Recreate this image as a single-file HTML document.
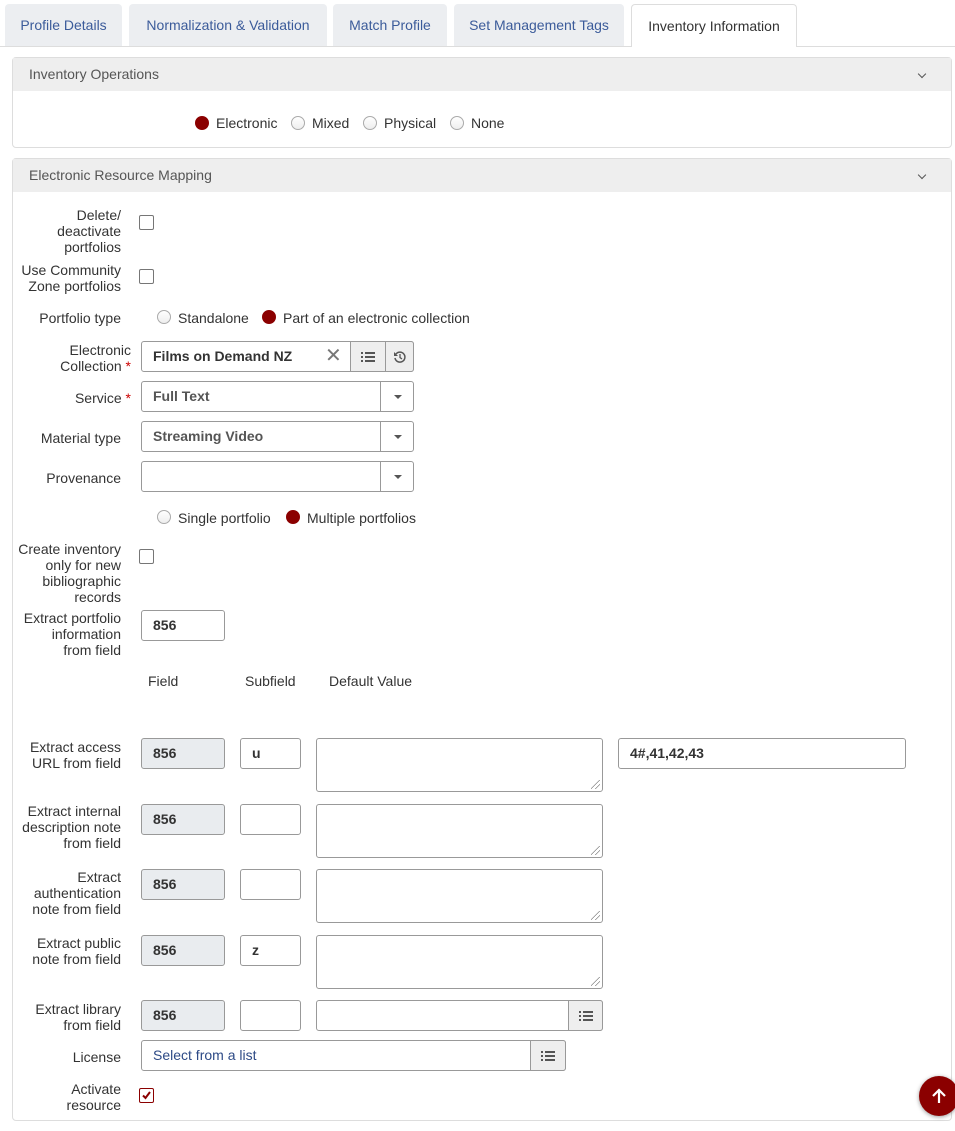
<!DOCTYPE html>
<html><head><meta charset="utf-8"><style>
*{box-sizing:border-box}
body{margin:0;width:955px;height:1131px;background:#fff;font-family:"Liberation Sans",sans-serif;font-size:14px;color:#333;position:relative;overflow:hidden}
.a{position:absolute}
.tab{position:absolute;top:4px;height:42px;background:#eceef1;border-radius:4px 4px 0 0;color:#3b5b9a;line-height:42px;text-align:center;font-size:14px}
.tab.act{background:#fff;border:1px solid #ddd;border-bottom:none;color:#333;height:43px}
.panel{position:absolute;left:12px;width:940px;border:1px solid #ddd;border-radius:4px}
.ph{height:33px;background:#eee;line-height:33px;padding-left:16px;color:#555;font-size:14px;position:relative}
.ph:after{content:"";position:absolute;right:26px;top:13px;width:5px;height:5px;border-right:1.5px solid #555;border-bottom:1.5px solid #555;transform:rotate(45deg)}
.lbl{position:absolute;right:834px;text-align:right;line-height:16px;width:120px}
.req{color:#c00}
.cb{position:absolute;left:139px;width:15px;height:15px;border:1px solid #767676;border-radius:2px;background:#fff}
.rd{position:absolute;width:14px;height:14px;border-radius:50%;border:1px solid #aaa;background:linear-gradient(#fff,#eee)}
.rd.on{background:#8b0000;border-color:#8b0000}
.rl{position:absolute;line-height:16px}
.in{position:absolute;border:1px solid #999;border-radius:3px;background:#fff;height:31px;line-height:29px;padding-left:11px;font-weight:bold}
.in.g{background:#e9ecef}
.ta{position:absolute;border:1px solid #999;border-radius:3px;background:#fff;height:54px}
.ta:after{content:"";position:absolute;right:2px;bottom:2px;width:9px;height:9px;background:linear-gradient(135deg,transparent 45%,#888 45%,#888 52%,transparent 52%,transparent 70%,#888 70%,#888 77%,transparent 77%)}
.btn{position:absolute;top:-1px;height:31px;border:1px solid #999;background:#eee;border-radius:0 3px 3px 0}
.dd{position:absolute;top:0;right:0;width:33px;height:29px;border-left:1px solid #999}
.dd:after{content:"";position:absolute;left:13px;top:13px;border:4px solid transparent;border-top:4px solid #555;border-bottom:none}
.li{position:absolute;left:50%;top:50%;transform:translate(-50%,-50%)}
</style></head><body>
<div class="tab" style="left:5px;width:117px">Profile Details</div>
<div class="tab" style="left:129px;width:198px">Normalization &amp; Validation</div>
<div class="tab" style="left:333px;width:114px">Match Profile</div>
<div class="tab" style="left:454px;width:170px">Set Management Tags</div>
<div class="a" style="left:0;top:46px;width:955px;height:1px;background:#ddd"></div>
<div class="tab act" style="left:631px;width:166px">Inventory Information</div>

<div class="panel" style="top:57px;height:91px"><div class="ph">Inventory Operations</div></div>
<div class="rd on" style="left:195px;top:116px"></div><div class="rl" style="left:216px;top:115px">Electronic</div>
<div class="rd" style="left:291px;top:116px"></div><div class="rl" style="left:312px;top:115px">Mixed</div>
<div class="rd" style="left:363px;top:116px"></div><div class="rl" style="left:384px;top:115px">Physical</div>
<div class="rd" style="left:450px;top:116px"></div><div class="rl" style="left:471px;top:115px">None</div>

<div class="panel" style="top:158px;height:963px"><div class="ph">Electronic Resource Mapping</div></div>

<div class="lbl" style="top:207px">Delete/<br>deactivate<br>portfolios</div>
<div class="cb" style="top:215px"></div>
<div class="lbl" style="top:262px">Use Community<br>Zone portfolios</div>
<div class="cb" style="top:269px"></div>
<div class="lbl" style="top:310px">Portfolio type</div>
<div class="rd" style="left:157px;top:310px"></div><div class="rl" style="left:178px;top:310px">Standalone</div>
<div class="rd on" style="left:262px;top:310px"></div><div class="rl" style="left:283px;top:310px">Part of an electronic collection</div>

<div class="lbl" style="top:342px;right:824px">Electronic<br>Collection <span class="req">*</span></div>
<div class="in" style="left:141px;top:341px;width:273px">Films on Demand NZ
 <span class="a" style="left:183px;top:0;font-size:20px;color:#777;font-weight:normal">✕</span>
 <div class="btn" style="left:208px;width:36px;border-radius:0"><svg class="li" width="14" height="12"><g fill="#555"><rect x="0" y="1" width="2" height="2"/><rect x="0" y="5" width="2" height="2"/><rect x="0" y="9" width="2" height="2"/><rect x="4" y="1" width="10" height="2"/><rect x="4" y="5" width="10" height="2"/><rect x="4" y="9" width="10" height="2"/></g></svg></div>
 <div class="btn" style="left:243px;width:29px"><svg class="li" width="14" height="14" viewBox="0 0 14 14"><path d="M3 4A5 5 0 1 1 2 8" fill="none" stroke="#555" stroke-width="1.5"/><path d="M1 2v4h4z" fill="#555"/><path d="M7 4v3.5l2 1.5" fill="none" stroke="#555" stroke-width="1.3"/></svg></div>
</div>

<div class="lbl" style="top:390px;right:824px">Service <span class="req">*</span></div>
<div class="in" style="left:141px;top:381px;width:273px;color:#555">Full Text<div class="dd"></div></div>
<div class="lbl" style="top:430px">Material type</div>
<div class="in" style="left:141px;top:421px;width:273px;color:#555">Streaming Video<div class="dd"></div></div>
<div class="lbl" style="top:470px">Provenance</div>
<div class="in" style="left:141px;top:461px;width:273px"><div class="dd"></div></div>

<div class="rd" style="left:157px;top:510px"></div><div class="rl" style="left:178px;top:510px">Single portfolio</div>
<div class="rd on" style="left:286px;top:510px"></div><div class="rl" style="left:307px;top:510px">Multiple portfolios</div>

<div class="lbl" style="top:541px">Create inventory<br>only for new<br>bibliographic<br>records</div>
<div class="cb" style="top:549px"></div>
<div class="lbl" style="top:610px">Extract portfolio<br>information<br>from field</div>
<div class="in" style="left:141px;top:610px;width:84px">856</div>

<div class="rl" style="left:148px;top:673px">Field</div>
<div class="rl" style="left:245px;top:673px">Subfield</div>
<div class="rl" style="left:329px;top:673px">Default Value</div>

<div class="lbl" style="top:739px">Extract access<br>URL from field</div>
<div class="in g" style="left:141px;top:738px;width:84px">856</div>
<div class="in" style="left:240px;top:738px;width:61px">u</div>
<div class="ta" style="left:316px;top:738px;width:287px"></div>
<div class="in" style="left:618px;top:738px;width:288px">4#,41,42,43</div>

<div class="lbl" style="top:803px">Extract internal<br>description note<br>from field</div>
<div class="in g" style="left:141px;top:804px;width:84px">856</div>
<div class="in" style="left:240px;top:804px;width:61px"></div>
<div class="ta" style="left:316px;top:804px;width:287px"></div>

<div class="lbl" style="top:869px">Extract<br>authentication<br>note from field</div>
<div class="in g" style="left:141px;top:869px;width:84px">856</div>
<div class="in" style="left:240px;top:869px;width:61px"></div>
<div class="ta" style="left:316px;top:869px;width:287px"></div>

<div class="lbl" style="top:935px">Extract public<br>note from field</div>
<div class="in g" style="left:141px;top:935px;width:84px">856</div>
<div class="in" style="left:240px;top:935px;width:61px">z</div>
<div class="ta" style="left:316px;top:935px;width:287px"></div>

<div class="lbl" style="top:1001px">Extract library<br>from field</div>
<div class="in g" style="left:141px;top:1000px;width:84px">856</div>
<div class="in" style="left:240px;top:1000px;width:61px"></div>
<div class="in" style="left:316px;top:1000px;width:287px"><div class="btn" style="left:251px;width:35px"><svg class="li" width="14" height="12"><g fill="#555"><rect x="0" y="1" width="2" height="2"/><rect x="0" y="5" width="2" height="2"/><rect x="0" y="9" width="2" height="2"/><rect x="4" y="1" width="10" height="2"/><rect x="4" y="5" width="10" height="2"/><rect x="4" y="9" width="10" height="2"/></g></svg></div></div>

<div class="lbl" style="top:1049px">License</div>
<div class="in" style="left:141px;top:1040px;width:425px;font-weight:normal;color:#2d4a86">Select from a list<div class="btn" style="left:388px;width:36px"><svg class="li" width="14" height="12"><g fill="#555"><rect x="0" y="1" width="2" height="2"/><rect x="0" y="5" width="2" height="2"/><rect x="0" y="9" width="2" height="2"/><rect x="4" y="1" width="10" height="2"/><rect x="4" y="5" width="10" height="2"/><rect x="4" y="9" width="10" height="2"/></g></svg></div></div>

<div class="lbl" style="top:1081px">Activate<br>resource</div>
<div class="cb" style="top:1088px;border-color:#8b0000"><svg class="a" style="left:1px;top:1px" width="11" height="11"><path d="M2 5.5l2.5 2.5 4.5-6" fill="none" stroke="#8b0000" stroke-width="2"/></svg></div>

<div class="a" style="left:919px;top:1076px;width:40px;height:40px;border-radius:50%;background:#8b0000;box-shadow:0 1px 4px rgba(0,0,0,.4)"><svg class="li" width="18" height="18" viewBox="0 0 18 18"><path d="M9 16V3M3 9l6-6 6 6" fill="none" stroke="#fff" stroke-width="2.2"/></svg></div>
</body></html>
